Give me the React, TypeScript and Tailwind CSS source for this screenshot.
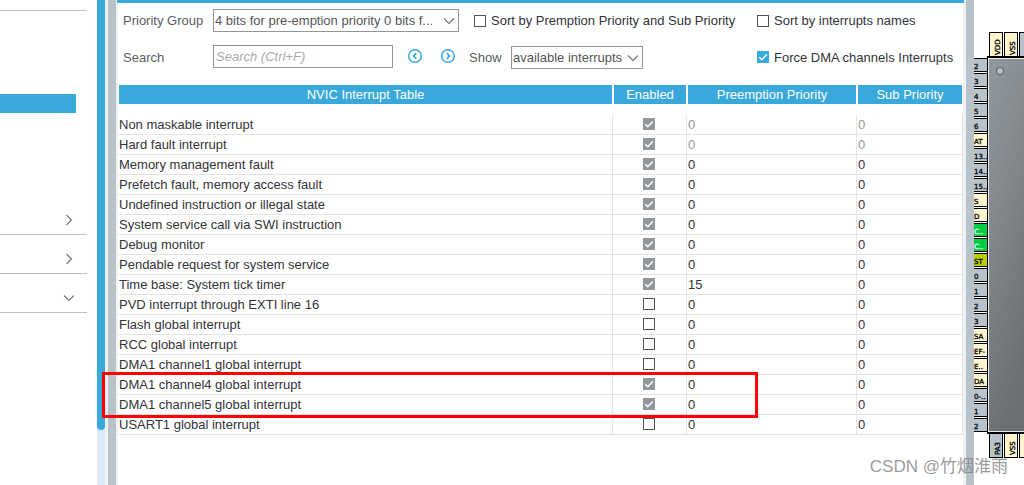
import { useState } from "react";
import type { ReactNode } from "react";

type Interrupt = {
  name: string;
  enabled: boolean;
  locked: boolean;
  preemption: number;
  sub: number;
  fixedPriority?: boolean;
};

const interrupts: Interrupt[] = [
  { name: "Non maskable interrupt", enabled: true, locked: true, preemption: 0, sub: 0, fixedPriority: true },
  { name: "Hard fault interrupt", enabled: true, locked: true, preemption: 0, sub: 0, fixedPriority: true },
  { name: "Memory management fault", enabled: true, locked: true, preemption: 0, sub: 0 },
  { name: "Prefetch fault, memory access fault", enabled: true, locked: true, preemption: 0, sub: 0 },
  { name: "Undefined instruction or illegal state", enabled: true, locked: true, preemption: 0, sub: 0 },
  { name: "System service call via SWI instruction", enabled: true, locked: true, preemption: 0, sub: 0 },
  { name: "Debug monitor", enabled: true, locked: true, preemption: 0, sub: 0 },
  { name: "Pendable request for system service", enabled: true, locked: true, preemption: 0, sub: 0 },
  { name: "Time base: System tick timer", enabled: true, locked: true, preemption: 15, sub: 0 },
  { name: "PVD interrupt through EXTI line 16", enabled: false, locked: false, preemption: 0, sub: 0 },
  { name: "Flash global interrupt", enabled: false, locked: false, preemption: 0, sub: 0 },
  { name: "RCC global interrupt", enabled: false, locked: false, preemption: 0, sub: 0 },
  { name: "DMA1 channel1 global interrupt", enabled: false, locked: false, preemption: 0, sub: 0 },
  { name: "DMA1 channel4 global interrupt", enabled: true, locked: true, preemption: 0, sub: 0 },
  { name: "DMA1 channel5 global interrupt", enabled: true, locked: true, preemption: 0, sub: 0 },
  { name: "USART1 global interrupt", enabled: false, locked: false, preemption: 0, sub: 0 },
];

function CheckBox({ id, label, initial = false, locked = false }: { id?: string; label?: string; initial?: boolean; locked?: boolean }) {
  const [checked, setChecked] = useState(initial);
  return (
    <span className="grid size-3 shrink-0">
      <input
        id={id}
        type="checkbox"
        aria-label={label}
        checked={checked}
        disabled={locked}
        onChange={(e) => setChecked(e.target.checked)}
        className="col-start-1 row-start-1 size-3 appearance-none border border-[#505054] bg-white checked:border-[#39a9dc] checked:bg-[#39a9dc] disabled:border-[#8f979d] disabled:bg-[#8f979d]"
      />
      {checked && (
        <svg viewBox="0 0 12 12" className="pointer-events-none col-start-1 row-start-1 size-3" fill="none" stroke="white" strokeWidth="1.4">
          <path d="M2.3 6.3 4.8 8.8 9.8 3.4" />
        </svg>
      )}
    </span>
  );
}

function LabeledCheck({ id, children, initial }: { id: string; children: ReactNode; initial?: boolean }) {
  return (
    <div className="flex items-center gap-[5px] whitespace-nowrap text-[#333338]">
      <CheckBox id={id} initial={initial} />
      <label htmlFor={id}>{children}</label>
    </div>
  );
}

function Chevron({ down = false, className = "" }: { down?: boolean; className?: string }) {
  return (
    <svg viewBox="0 0 12 12" className={`size-3 ${className}`} fill="none" stroke="#77777b" strokeWidth="1.2">
      <path d={down ? "M1 3.5 6 8.5 11 3.5" : "M3.5 1 8.5 6 3.5 11"} />
    </svg>
  );
}

function Select({ id, label, value, className }: { id: string; label?: string; value: string; className: string }) {
  return (
    <div className={`grid shrink-0 ${className}`}>
      <select id={id} aria-label={label} className="col-start-1 row-start-1 h-[23px] w-full appearance-none border border-[#8f979d] bg-white pl-px text-[#55555a]">
        <option>{value}</option>
      </select>
      <Chevron down className="pointer-events-none col-start-1 row-start-1 mr-1 self-center justify-self-end" />
    </div>
  );
}

function StepButton({ label, next = false }: { label: string; next?: boolean }) {
  return (
    <button type="button" aria-label={label} className="size-4">
      <svg viewBox="0 0 16 16" className="size-4" fill="none" stroke="#39a9dc">
        <circle cx="8" cy="8" r="6.3" strokeWidth="1.5" />
        <path d={next ? "M6.8 5.2 9.6 8 6.8 10.8" : "M9.2 5.2 6.4 8 9.2 10.8"} strokeWidth="1.7" />
      </svg>
    </button>
  );
}

function Sidebar() {
  return (
    <nav aria-label="Categories" className="w-[97px] shrink-0">
      <div className="mr-[10px]">
        <div className="h-[11px] border-b border-[#b7c2c9]" />
        <div className="mt-[83px] mr-[11px] mb-[83px] h-[19px] bg-[#39a9dc]" />
        {[false, false, true].map((down, i) => (
          <button
            key={i}
            type="button"
            aria-label={`Category ${i + 1}`}
            aria-expanded={down}
            className="flex h-[39px] w-full items-center justify-end border-b border-[#b7c2c9] pt-[10px] pr-3"
          >
            <Chevron down={down} />
          </button>
        ))}
      </div>
    </nav>
  );
}

function Toolbar() {
  return (
    <div className="grid grid-cols-[1fr_206px] gap-y-[13px] pt-[6px] pb-4 pl-[5px] text-[#5c5c62]">
      <div className="flex items-center">
        <label htmlFor="group" className="w-[90px] shrink-0">Priority Group</label>
        <Select id="group" value="4 bits for pre-emption priority 0 bits f..." className="mr-[15px] w-[246px]" />
        <LabeledCheck id="sort-priority">Sort by Premption Priority and Sub Priority</LabeledCheck>
      </div>
      <LabeledCheck id="sort-names">Sort by interrupts names</LabeledCheck>
      <div className="flex h-6 items-center">
        <label htmlFor="search" className="w-[90px] shrink-0">Search</label>
        <input
          id="search"
          type="text"
          placeholder="Search (Ctrl+F)"
          className="h-[23px] w-[180px] shrink-0 self-start border border-[#8f979d] pl-0.5 placeholder:text-[#a9a9ad] placeholder:italic"
        />
        <div className="flex gap-[17px] pr-[13px] pb-0.5 pl-[14px]">
          <StepButton label="Previous match" />
          <StepButton label="Next match" next />
        </div>
        <label htmlFor="show" className="w-[42px] shrink-0 whitespace-nowrap">Show</label>
        <Select id="show" value="available interrupts" className="w-[132px] self-end" />
      </div>
      <LabeledCheck id="force" initial>Force DMA channels Interrupts</LabeledCheck>
    </div>
  );
}

const headClass = "h-[30px] border-x border-b-[11px] border-white bg-[#39a9dc] p-0 font-normal text-white";
const cellClass = "h-5 border-r border-b border-[#e1e3e5] p-0";

function InterruptTable() {
  return (
    <div className="relative">
      <table className="w-full table-fixed border-separate border-spacing-0 leading-[19px] text-[#333338]">
        <colgroup>
          <col />
          <col className="w-[74px]" />
          <col className="w-[170px]" />
          <col className="w-[106px]" />
        </colgroup>
        <thead>
          <tr>
            <th className={headClass}>NVIC Interrupt Table</th>
            <th className={headClass}>Enabled</th>
            <th className={headClass}>Preemption Priority</th>
            <th className={headClass}>Sub Priority</th>
          </tr>
        </thead>
        <tbody>
          {interrupts.map((row) => {
            const tone = row.fixedPriority ? "text-[#96969a]" : "";
            return (
              <tr key={row.name}>
                <td className={`${cellClass} pl-px whitespace-nowrap`}>{row.name}</td>
                <td className={cellClass}>
                  <div className="flex justify-center pr-px pb-px">
                    <CheckBox label={row.name} initial={row.enabled} locked={row.locked} />
                  </div>
                </td>
                <td className={`${cellClass} pl-px ${tone}`}>{row.preemption}</td>
                <td className={`${cellClass} pl-px ${tone}`}>{row.sub}</td>
              </tr>
            );
          })}
        </tbody>
      </table>
      {/* highlight around the two DMA channel rows */}
      <div className="pointer-events-none absolute top-[287px] right-[205px] bottom-[17px] -left-4 border-3 border-[#ff0000]" />
    </div>
  );
}

const power = "#fff4cc";
const idle = "#b7c2c9";
const leftPins: [string, string][] = [
  ["2", idle], ["3", idle], ["4", idle], ["5", idle], ["6", idle],
  ["AT", power], ["13..", idle], ["14..", idle], ["15..", idle],
  ["S", power], ["D", power], ["C..", "#00cc44"], ["C..", "#00cc44"], ["ST", "#bbcc00"],
  ["0", idle], ["1", idle], ["2", idle], ["3", idle],
  ["SA", power], ["EF-", power], ["E..", power], ["DA", power],
  ["0-..", idle], ["1", idle], ["2", idle],
];
const topPins: [string, string][] = [["VDD", power], ["VSS", power], ["", idle]];
const bottomPins: [string, string][] = [["PA3", idle], ["VSS", power], ["", power]];

function Chip() {
  return (
    <svg width="50" height="485" viewBox="0 0 50 485" className="block shrink-0" fontFamily="'DejaVu Sans', sans-serif" fontSize="7" role="img" aria-label="Pinout view">
      <defs>
        <linearGradient id="body" x1="0" y1="0" x2="0.35" y2="1">
          <stop offset="0" stopColor="#92999e" />
          <stop offset="1" stopColor="#6c7072" />
        </linearGradient>
      </defs>
      {leftPins.map(([text, fill], i) => (
        <g key={i}>
          <rect x="-2" y={58.5 + i * 15} width="15.5" height="13" fill={fill} stroke="black" />
          <text x="0" y={69 + i * 15} fill={fill === "#00cc44" ? "white" : "black"} stroke={fill === "#00cc44" ? "white" : "black"} strokeWidth="0.3">{text}</text>
        </g>
      ))}
      {topPins.map(([text, fill], i) => (
        <g key={i}>
          <rect x={15.5 + i * 15} y="32.5" width="13" height="26" fill={fill} stroke="black" />
          <text transform={`translate(${26 + i * 15} 55) rotate(-90)`} stroke="black" strokeWidth="0.3">{text}</text>
        </g>
      ))}
      {bottomPins.map(([text, fill], i) => (
        <g key={i}>
          <rect x={15.5 + i * 15} y="431.5" width="13" height="26" fill={fill} stroke="black" />
          <text transform={`translate(${26 + i * 15} 455) rotate(-90)`} stroke="black" strokeWidth="0.3">{text}</text>
        </g>
      ))}
      <rect x="13" y="56" width="40" height="378" fill="black" />
      <rect x="14" y="58" width="40" height="374" fill="#e8e8ea" />
      <rect x="15" y="59" width="40" height="372" fill="url(#body)" />
      <circle cx="26" cy="71" r="3.5" fill="#b7c2c9" stroke="#54595c" />
    </svg>
  );
}

export default function App() {
  return (
    <div className="relative flex min-h-screen overflow-hidden bg-white font-['Liberation_Sans',Arial,sans-serif] text-[13px] leading-[19px]">
      <Sidebar />
      <div className="w-2 shrink-0 bg-[#dae9f5]">
        <div className="h-[430px] rounded-b-full bg-[#39a9dc]" />
      </div>
      <div className="w-[3px] shrink-0 bg-[#f0f1f4]" />
      <div className="w-2 shrink-0 bg-[#b7c2c9]" />
      <main className="min-w-0 flex-1 border-r-3 border-l-2 border-[#eff1f3]">
        <div className="-mr-px -ml-px h-[3px] bg-[#39a9dc]" />
        <Toolbar />
        <InterruptTable />
      </main>
      <div className="w-2 shrink-0 bg-[#b7c2c9]" />
      <Chip />
      <div className="pointer-events-none absolute right-4 bottom-[6px] font-['Liberation_Sans','Noto_Sans_CJK_SC',sans-serif] text-[17px] leading-6 whitespace-nowrap text-[#808084]/80">
        CSDN @竹烟淮雨
      </div>
    </div>
  );
}
